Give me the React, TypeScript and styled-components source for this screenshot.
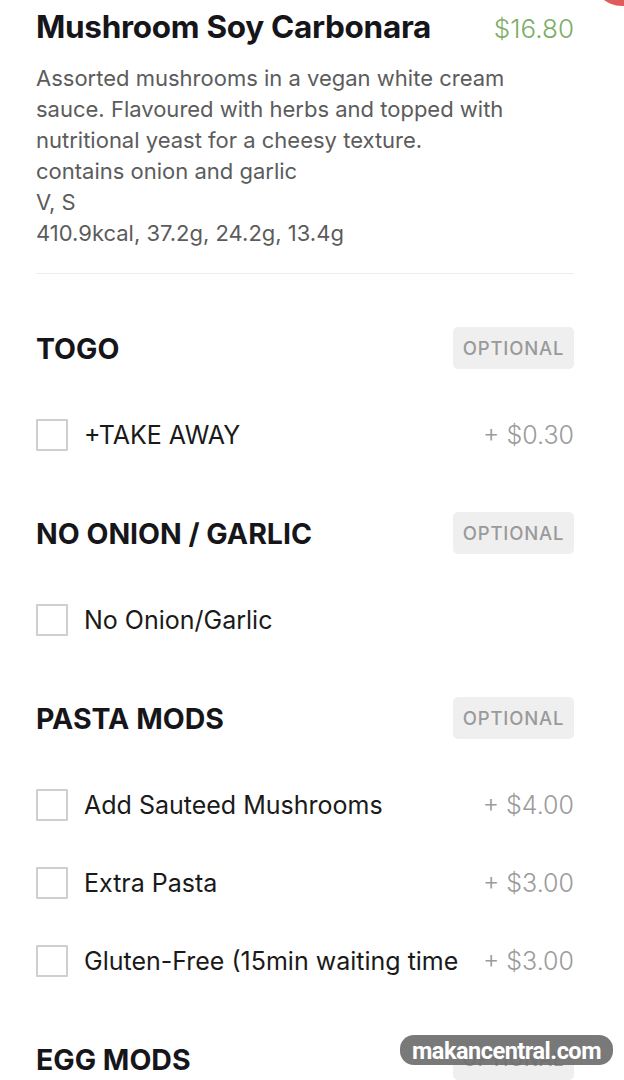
import styled, { createGlobalStyle } from 'styled-components'

const GlobalStyle = createGlobalStyle`
  html, body {
    margin: 0;
    padding: 0;
    background: #fff;
  }
  body {
    font-family: Inter, 'Noto Sans', sans-serif;
    color: #1c1c1e;
    overflow: hidden;
  }
`

const Page = styled.div`
  position: relative;
  width: 624px;
  height: 1080px;
  overflow: hidden;
  box-sizing: border-box;
  padding: 0 50px 0 36px;
`

const CloseBubble = styled.div`
  position: absolute;
  top: -54px;
  right: -28px;
  width: 60px;
  height: 60px;
  border-radius: 50%;
  background: #e05b5b;
`

const TitleRow = styled.div`
  display: flex;
  justify-content: space-between;
  align-items: baseline;
  padding-top: 8px;
`

const DishName = styled.h1`
  margin: 0;
  font-size: 31.5px;
  line-height: 38px;
  font-weight: 700;
  letter-spacing: -0.3px;
  color: #16161a;
`

const DishPrice = styled.span`
  font-size: 26px;
  font-weight: 300;
  color: #7cad66;
`

const Description = styled.p`
  margin: 17px 0 0;
  font-size: 22px;
  line-height: 31px;
  font-weight: 400;
  color: #5c5c5c;
`

const Divider = styled.hr`
  margin: 24px 0 0;
  border: none;
  border-top: 1px solid #ececec;
`

const Sections = styled.div`
  display: flex;
  flex-direction: column;
  gap: 38px;
  padding-top: 53px;
`

const Section = styled.section`
  display: flex;
  flex-direction: column;
`

const SectionHeader = styled.div`
  display: flex;
  justify-content: space-between;
  align-items: center;
  height: 42px;
  margin-bottom: 27px;
`

const SectionTitle = styled.h2`
  margin: 0;
  font-size: 28.5px;
  font-weight: 700;
  color: #16161a;
`

const Badge = styled.span`
  display: flex;
  align-items: center;
  justify-content: center;
  width: 121px;
  height: 42px;
  border-radius: 5px;
  background: #efefef;
  color: #9a9a9a;
  font-size: 18.5px;
  font-weight: 500;
  letter-spacing: 0.8px;
`

const OptionRow = styled.label`
  display: flex;
  align-items: center;
  height: 78px;
`

const Checkbox = styled.span`
  flex: none;
  width: 32px;
  height: 32px;
  box-sizing: border-box;
  border: 2px solid #cfcfcf;
  border-radius: 1px;
  margin-right: 16px;
`

const OptionName = styled.span`
  flex: 1;
  font-size: 25px;
  font-weight: 400;
  color: #1a1a1a;
  white-space: nowrap;
  overflow: hidden;
`

const OptionPrice = styled.span`
  flex: none;
  padding-left: 24px;
  font-size: 25px;
  font-weight: 300;
  color: #9b9b9b;
`

const Watermark = styled.div`
  position: absolute;
  left: 400px;
  top: 1035px;
  width: 213px;
  height: 30px;
  border-radius: 14px;
  background: rgba(110, 110, 110, 0.92);
  color: #fff;
  font-family: Roboto, 'Liberation Sans', sans-serif;
  font-weight: 700;
  font-size: 23.5px;
  letter-spacing: -0.5px;
  display: flex;
  align-items: center;
  justify-content: center;
  padding-top: 2px;
  box-sizing: border-box;
`

type Option = { name: string; price?: string }
type Group = { title: string; options: Option[] }

const groups: Group[] = [
  { title: 'TOGO', options: [{ name: '+TAKE AWAY', price: '+ $0.30' }] },
  { title: 'NO ONION / GARLIC', options: [{ name: 'No Onion/Garlic' }] },
  {
    title: 'PASTA MODS',
    options: [
      { name: 'Add Sauteed Mushrooms', price: '+ $4.00' },
      { name: 'Extra Pasta', price: '+ $3.00' },
      { name: 'Gluten-Free (15min waiting time)', price: '+ $3.00' },
    ],
  },
  { title: 'EGG MODS', options: [] },
]

const App = () => {
  return (
    <>
      <GlobalStyle />
      <Page>
        <CloseBubble />
        <TitleRow>
          <DishName>Mushroom Soy Carbonara</DishName>
          <DishPrice>$16.80</DishPrice>
        </TitleRow>
        <Description>
          Assorted mushrooms in a vegan white cream
          <br />
          sauce. Flavoured with herbs and topped with
          <br />
          nutritional yeast for a cheesy texture.
          <br />
          contains onion and garlic
          <br />
          V, S
          <br />
          410.9kcal, 37.2g, 24.2g, 13.4g
        </Description>
        <Divider />
        <Sections>
          {groups.map((g) => (
            <Section key={g.title}>
              <SectionHeader>
                <SectionTitle>{g.title}</SectionTitle>
                <Badge>OPTIONAL</Badge>
              </SectionHeader>
              {g.options.map((o) => (
                <OptionRow key={o.name}>
                  <Checkbox />
                  <OptionName>{o.name}</OptionName>
                  {o.price && <OptionPrice>{o.price}</OptionPrice>}
                </OptionRow>
              ))}
            </Section>
          ))}
        </Sections>
        <Watermark>makancentral.com</Watermark>
      </Page>
    </>
  )
}

export default App
